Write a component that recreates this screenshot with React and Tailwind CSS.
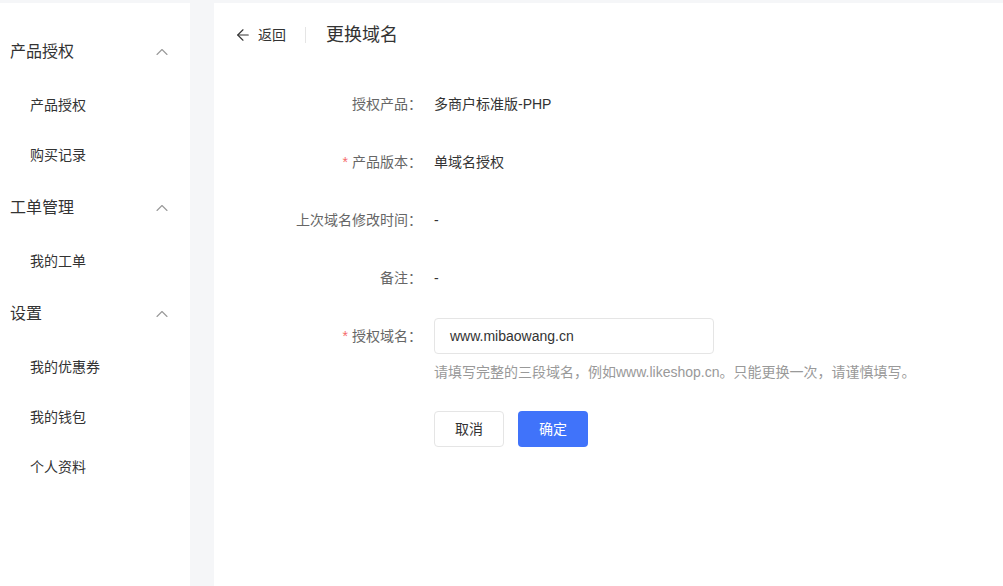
import { ChevronUp, ArrowLeft } from 'lucide-react';

const menu = [
  { title: '产品授权', items: ['产品授权', '购买记录'] },
  { title: '工单管理', items: ['我的工单'] },
  { title: '设置', items: ['我的优惠券', '我的钱包', '个人资料'] },
];

const fields = [
  { label: '授权产品', value: '多商户标准版-PHP' },
  { label: '产品版本', value: '单域名授权', required: true },
  { label: '上次域名修改时间', value: '-' },
  { label: '备注', value: '-' },
];

function Label({ text, required }) {
  return (
    <div className="w-[198px] shrink-0 pr-[12px] text-right text-[14px] text-[#666]">
      {required && <span className="text-[#f56c6c] mr-[4px]">*</span>}
      {text}：
    </div>
  );
}

export default function App() {
  return (
    <div
      className="flex min-h-[586px] bg-[#f5f6f8] pt-[3px] gap-[24px] text-[#333]"
      style={{ fontFamily: '"Liberation Sans", "Noto Sans CJK SC", sans-serif' }}
    >
      {/* Sidebar */}
      <aside className="w-[190px] shrink-0 bg-white pt-[21px]">
        {menu.map((group) => (
          <div key={group.title}>
            <div className="h-[56px] flex items-center justify-between pl-[10px] pr-[18px] text-[16px] text-[#333]">
              <span>{group.title}</span>
              <ChevronUp className="w-[20px] h-[20px] text-[#999]" strokeWidth={1.3} />
            </div>
            {group.items.map((item) => (
              <div key={item} className="h-[50px] flex items-center pl-[30px] text-[14px] text-[#333]">
                {item}
              </div>
            ))}
          </div>
        ))}
      </aside>

      {/* Main */}
      <main className="flex-1 bg-white px-[20px]">
        <div className="h-[64px] flex items-center">
          <div className="flex items-center gap-[6px] text-[14px] text-[#333]">
            <ArrowLeft className="w-[18px] h-[18px]" strokeWidth={1.5} />
            <span>返回</span>
          </div>
          <div className="w-px h-[16px] bg-[#e5e5e5] ml-[19px] mr-[20px]" />
          <h1 className="text-[18px] text-[#333]">更换域名</h1>
        </div>

        <div className="pt-[19px] pl-[2px]">
          {fields.map((f) => (
            <div key={f.label} className="h-[36px] mb-[22px] flex items-center">
              <Label text={f.label} required={f.required} />
              <div className="text-[14px] text-[#333]">{f.value}</div>
            </div>
          ))}

          <div className="flex items-start">
            <div className="h-[36px] flex items-center">
              <Label text="授权域名" required />
            </div>
            <div>
              <div className="w-[280px] h-[36px] border border-[#e5e5e5] rounded-[4px] flex items-center px-[15px] text-[14px] text-[#333]">
                www.mibaowang.cn
              </div>
              <div className="mt-[8px] leading-[20px] text-[14px] text-[#999]">
                请填写完整的三段域名，例如www.likeshop.cn。只能更换一次，请谨慎填写。
              </div>
              <div className="mt-[29px] flex gap-[14px]">
                <button className="w-[70px] h-[36px] border border-[#e5e5e5] rounded-[4px] bg-white text-[14px] text-[#333]">
                  取消
                </button>
                <button className="w-[70px] h-[36px] rounded-[4px] bg-[#4073fa] text-[14px] text-white">
                  确定
                </button>
              </div>
            </div>
          </div>
        </div>
      </main>
    </div>
  );
}
